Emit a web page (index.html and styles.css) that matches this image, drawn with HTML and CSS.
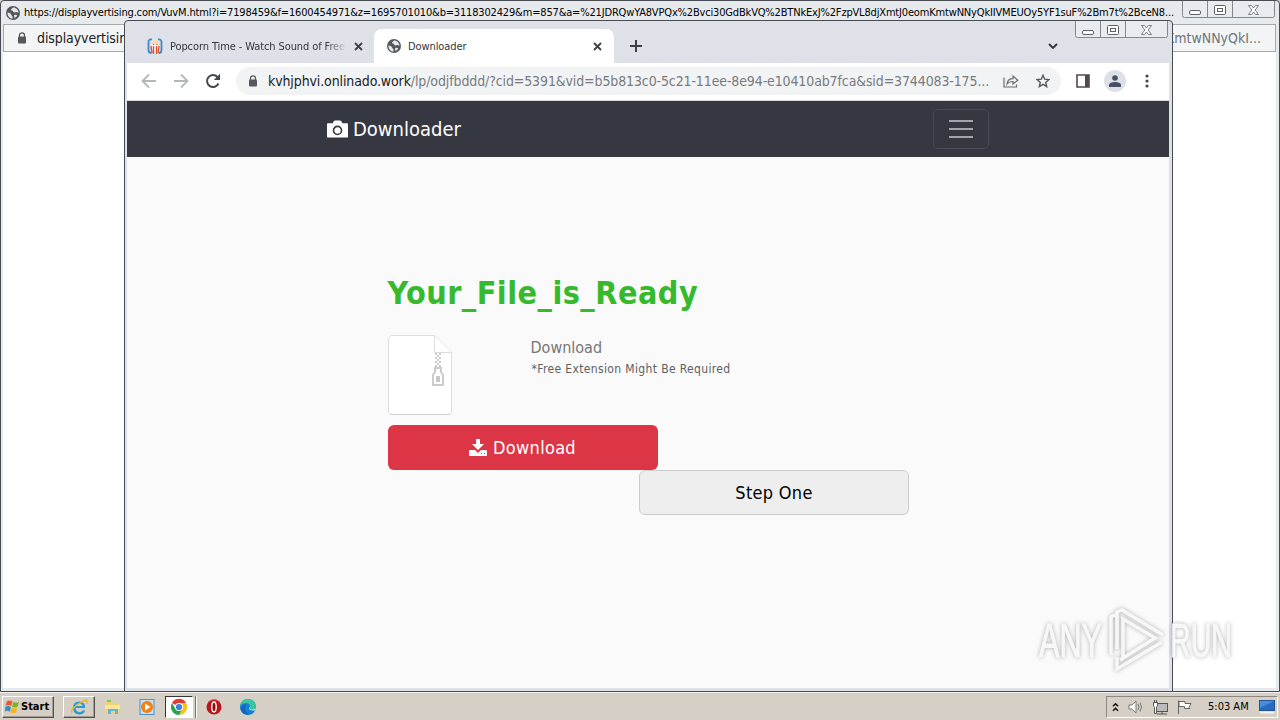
FILE: index.html
```
<!DOCTYPE html>
<html lang="en">

<head>
  <meta charset="UTF-8">
  <meta name="viewport" content="width=device-width, initial-scale=1.0">
  <title>Downloader</title>
  <link rel="stylesheet" href="styles.css">
</head>

<body>
  <svg width="0" height="0" class="symbols">
    <symbol id="globe" viewBox="0 0 14 14">
      <circle cx="7" cy="7" r="7" fill="#54585d" />
      <path d="M1.500 6.500c2 .2 3.500 1 3.700 2.200.1 1 1.300.8 1.300 2v2C3.500 12.500 1.300 10 1.500 6.500zM7 1.500c-.2 1-1.800 1-2 2.200 0 .9 1.700.6 2 1.500.3 1 1.700 1.500 2.500 1 .8-.4 1.800.2 3 .6 0-2.800-2.300-5.300-5.500-5.300zM8 9.200c1-.8 2.500-.5 3.300.3-.6 1.200-1.600 2-2.800 2.500z" fill="#e4e7ea" />
    </symbol>
    <symbol id="lock" viewBox="0 0 10 12">
      <path d="M2.500 5V3.300a2.500 2.500 0 0 1 5 0V5" fill="none" stroke="#54585d" stroke-width="1.300" />
      <rect x="1" y="4.500" width="8" height="7" rx="1" fill="#54585d" />
    </symbol>
    <symbol id="caption" viewBox="0 0 94 18">
      <path d="M.5 0v14.500q0 2 2 2h88q2 0 2-2V0M25.500 0v16M50.500 0v16" fill="#e9ecef" stroke="#83888d" />
      <rect x="7.500" y="9.500" width="11" height="4" rx="1.500" fill="#fff" stroke="#5c6167" />
      <rect x="32.500" y="4.500" width="11" height="9" rx="1" fill="#fff" stroke="#5c6167" />
      <rect x="35.500" y="7.500" width="5" height="3" fill="#fff" stroke="#5c6167" />
      <path d="M66.500 4.500h3l2 2.500 2-2.500h3l-3.300 4.500 3.300 4.500h-3l-2-2.500-2 2.500h-3l3.300-4.500z" fill="#fff" stroke="#6c7177" stroke-width=".9" />
    </symbol>
  </svg>

  <div class="desktop">
    <div class="window back-window">
      <div class="title-bar">
        <svg class="title-icon"><use href="#globe" /></svg>
        <span class="title-text">https://displayvertising.com/VuvM.html?i=7198459&amp;f=1600454971&amp;z=1695701010&amp;b=3118302429&amp;m=857&amp;a=%21JDRQwYA8VPQx%2Bvci30GdBkVQ%2BTNkExJ%2FzpVL8djXmtJ0eomKmtwNNyQkIIVMEUOy5YF1suF%2Bm7t%2BceN8...</span>
      </div>
      <svg class="caption"><use href="#caption" /></svg>
      <div class="popup-address">
        <svg class="lock"><use href="#lock" /></svg>
        <span class="popup-host">displayvertising.com</span>
        <span class="popup-path">KmtwNNyQkI...</span>
      </div>
      <div class="popup-page"></div>
    </div>

    <div class="window front-window">
      <svg class="caption"><use href="#caption" /></svg>
      <div class="tab-strip">
        <div class="tab">
          <svg class="popcorn" viewBox="0 0 16 16">
            <path d="M5 1.500Q1.500 1 1.500 4v8q0 3 3 3M11 1.500q3.500-.5 3.500 2.500v8q0 3-3 3" fill="none" stroke="#3c86d0" stroke-width="1.800" />
            <path d="M4 7l1 9h6l1-9z" fill="#fff" />
            <path d="M4 8l1 7M6.500 8v8M9.500 8v8M12 8l-1 7" stroke="#d9502f" stroke-width="1.400" />
            <path d="M4 7q-1-3 2-3 1-3 4-1.500 3 0 2 4.500z" fill="#f4dcbf" />
            <path d="M6 7l1-1M9.500 6l1 1" stroke="#80604c" />
          </svg>
          <span class="tab-title fade">Popcorn Time - Watch Sound of Free</span>
          <svg class="tab-close" viewBox="0 0 9 9"><path d="M1 1l7 7M8 1l-7 7" stroke="#3c4043" stroke-width="1.800" /></svg>
        </div>
        <div class="tab active">
          <svg class="title-icon"><use href="#globe" /></svg>
          <span class="tab-title">Downloader</span>
          <svg class="tab-close" viewBox="0 0 9 9"><path d="M1 1l7 7M8 1l-7 7" stroke="#3c4043" stroke-width="1.800" /></svg>
        </div>
        <svg class="new-tab" viewBox="0 0 12 12"><path d="M6 0v12M0 6h12" stroke="#3c4043" stroke-width="2" /></svg>
        <svg class="tab-search" viewBox="0 0 10 6"><path d="M1 1l4 4 4-4" fill="none" stroke="#303338" stroke-width="1.800" /></svg>
      </div>

      <div class="toolbar">
        <svg class="nav-icon" viewBox="0 0 16 16"><path d="M15 8H2M8 1.500L1.500 8 8 14.500" fill="none" stroke="#b4b7ba" stroke-width="1.800" /></svg>
        <svg class="nav-icon" viewBox="0 0 16 16"><path d="M1 8h13M8 1.500L14.500 8 8 14.500" fill="none" stroke="#b4b7ba" stroke-width="1.800" /></svg>
        <svg class="nav-icon" viewBox="0 0 16 16"><path d="M13.500 10.500A6 6 0 1 1 12.500 4" fill="none" stroke="#45494d" stroke-width="2" /><path d="M15 .8V7H8.800z" fill="#45494d" /></svg>
        <div class="omnibox">
          <svg class="lock"><use href="#lock" /></svg>
          <span class="url"><span class="url-host">kvhjphvi.onlinado.work</span>/lp/odjfbddd/?cid=5391&amp;vid=b5b813c0-5c21-11ee-8e94-e10410ab7fca&amp;sid=3744083-175...</span>
          <svg class="share" viewBox="0 0 16 14"><path d="M1 3.500V13h12.500v-2.500M4 10c.4-3.500 2.500-5.300 6-5.300V2l4.800 4.200L10 10V7.500C7 7.500 5.500 8 4 10z" fill="none" stroke="#6a6e73" stroke-width="1.200" /></svg>
          <svg class="star" viewBox="0 0 14 14"><path d="M7 1.300l1.700 3.900 4.200.4-3.200 2.800 1 4.200L7 10.400l-3.700 2.200 1-4.200L1.100 5.600l4.200-.4z" fill="none" stroke="#54585d" stroke-width="1.400" /></svg>
        </div>
        <svg class="side-panel" viewBox="0 0 14 14"><path d="M1 1h12v12H1z" fill="none" stroke="#54484a" stroke-width="1.600" /><path d="M9 1h4v12H9z" fill="#54484a" /></svg>
        <div class="avatar">
          <svg viewBox="0 0 12 12"><circle cx="6" cy="3" r="2.800" fill="#495063" /><path d="M0 12v-2c0-2 3-3 6-3s6 1 6 3v2z" fill="#495063" /></svg>
        </div>
        <svg class="menu-dots" viewBox="0 0 4 14"><g fill="#45494d"><circle cx="2" cy="2" r="1.600" /><circle cx="2" cy="7" r="1.600" /><circle cx="2" cy="12" r="1.600" /></g></svg>
      </div>

      <div class="navbar">
        <div class="brand">
          <svg class="camera" viewBox="0 0 22 18"><path d="M1 3h5l1-2q.5-1 1.500-1h5q1 0 1.500 1l1 2h5q1 0 1 1v13q0 1-1 1H1q-1 0-1-1V4q0-1 1-1z" fill="#fff" /><circle cx="11" cy="10.500" r="4.200" fill="#fff" stroke="#353840" stroke-width="1.700" /></svg>
          <span>Downloader</span>
        </div>
        <div class="toggler"><i></i><i></i><i></i></div>
      </div>

      <div class="page">
        <h1>Your_File_is_Ready</h1>
        <div class="file-row">
          <svg class="file-icon" viewBox="0 0 64 80">
            <path d="M4 .5h43L63.500 17v59q0 3.500-3.500 3.500H4Q.5 79.500.5 76V4Q.5.5 4 .5z" fill="#fff" stroke="#dedede" />
            <path d="M2 79.500h60" stroke="#cfcfcf" />
            <path d="M46.500 1v16.500h17" fill="#fff" stroke="#dcdcdc" />
            <path d="M48 18v16M52 18v16" stroke="#ccc" stroke-width="2" stroke-dasharray="2 2" />
            <path d="M50 20v16" stroke="#d0d0d0" stroke-width="2" stroke-dasharray="2 2" />
            <path d="M47 33h6v4l2 3v10H45V40l2-3z" fill="#fff" stroke="#ccc" stroke-width="2" />
            <rect x="48" y="41" width="4" height="6" fill="#c8c8c8" />
          </svg>
          <div class="file-info">
            <div class="file-name">Download</div>
            <div class="file-note">*Free Extension Might Be Required</div>
          </div>
        </div>
        <div class="btn btn-download">
          <svg class="download-icon" viewBox="0 0 18 17"><path d="M7 0h4v5h4l-6 6-6-6h4zM1 11h5l3 3 3-3h5q1 0 1 1v4q0 1-1 1H1q-1 0-1-1v-4q0-1 1-1z" fill="#fff" /><path d="M12 14.500h1M15 14.500h1" stroke="#dc3545" /></svg>
          <span>Download</span>
        </div>
        <div class="btn btn-step"><span>Step One</span></div>
      </div>
    </div>

    <svg class="watermark" viewBox="0 0 214 76">
      <g class="watermark-shape">
        <text x="6" y="53" textLength="63" lengthAdjust="spacingAndGlyphs">ANY</text>
        <text x="137" y="53" textLength="62" lengthAdjust="spacingAndGlyphs">RUN</text>
        <path d="M78 51V13l6-3M84 45V8l5-2 41 25M90 54V15l32 19-35 22M84 53v12l45-27" />
      </g>
    </svg>

    <div class="taskbar">
      <div class="start">
        <svg viewBox="0 0 16 15"><path d="M2 2q3-2 6 0L6.500 7q-3-2-6 0z" fill="#e85a26" /><path d="M9 2.500q3 2 6 0L13.500 7.500q-3 2-6 0z" fill="#77b52b" /><path d="M.3 8q3-2 6 0L5 13q-3-2-5 0z" fill="#358bc8" /><path d="M7 8.500q3 2 6 0L12 13.500q-3 2-6.300 0z" fill="#f3b71b" /></svg>
        <span>Start</span>
      </div>
      <div class="task raised">
        <svg viewBox="0 0 18 18"><path d="M14.500 10H5.500q.5 4 4 4 2 0 3.200-1.600h2.600Q13.800 16.500 9.500 16.500 3 16.300 3 9.800 3.200 3.500 9.300 3.500q6 .2 6 6.500zM5.700 8h6.700Q12 5.500 9 5.500T5.700 8z" fill="#299bd8" /><path d="M2 15q-2-3 5-8t9-5q2 1 .5 3.500" fill="none" stroke="#ebb630" stroke-width="1.500" /></svg>
      </div>
      <div class="task">
        <svg viewBox="0 0 18 18"><path d="M2 3h6l1 2h7v10H2z" fill="#efd36d" /><path d="M3 2h4v2H3z" fill="#7bc66c" /><path d="M1 7h15v4H1z" fill="#f8e7a2" /><path d="M4 16v-5h10v5h-3v-3H7v3z" fill="#65b2dc" /></svg>
      </div>
      <div class="task">
        <svg viewBox="0 0 18 18"><rect x="2" y="1.500" width="14" height="15" fill="#c7dff0" stroke="#4794cf" /><circle cx="9" cy="9" r="6" fill="#f08114" /><path d="M7 5.500v7L12.500 9z" fill="#fff" /></svg>
      </div>
      <div class="task pressed">
        <svg viewBox="0 0 18 18"><path d="M9 9L2 5a8 8 0 0 1 14 0z" fill="#e23d30" /><path d="M9 9V5h7a8 8 0 0 1-7 12l3.500-6z" fill="#fbc116" /><path d="M9 9l3.500 2L9 17A8 8 0 0 1 2 5l3.500 6z" fill="#2aa34a" /><circle cx="9" cy="9" r="4" fill="#fff" /><circle cx="9" cy="9" r="3.100" fill="#3b7de9" /></svg>
      </div>
      <div class="task-divider"></div>
      <div class="task">
        <svg viewBox="0 0 18 18"><circle cx="9" cy="9" r="7.500" fill="#ba1519" /><path d="M3 4q6-5 12 0" fill="none" stroke="#de6765" /><ellipse cx="9" cy="9" rx="2.200" ry="5" fill="#8c0b10" stroke="#fff" stroke-width="1.400" /></svg>
      </div>
      <div class="task">
        <svg viewBox="0 0 18 18"><circle cx="9" cy="9" r="8" fill="#1681d4" /><path d="M1.200 8Q2 1 9 1t8 7q-.5 4-5 3.500-2-.5-1-2Q11.500 5 7 5 3 5 1.200 8z" fill="#39c6a1" /><path d="M6.500 8q-2 6 4 8-7 2-9-5 1-4 6-5z" fill="#1565b6" /><path d="M10 9.500Q9.500 13 16 12.500L17 10q-2 2-5 1.500-2-.5-1-2z" fill="#d5eef0" /></svg>
      </div>

      <div class="tray">
        <svg class="chevrons" viewBox="0 0 7 10"><path d="M1 4.200l2.500-2.500L6 4.200M1 8.700l2.500-2.500L6 8.700" fill="none" stroke="#111" stroke-width="1.500" /></svg>
        <svg class="tray-icon" viewBox="0 0 16 16"><path d="M1 6h3l4-4v12l-4-4H1z" fill="#fff" stroke="#777" /><path d="M10 5q2 3 0 6M12 3.500q3 4.500 0 9" fill="none" stroke="#777" /></svg>
        <svg class="tray-icon" viewBox="0 0 16 16"><rect x="4.500" y="4.500" width="11" height="8" fill="#bbb" stroke="#555" /><path d="M5 15h10M10 13v2" stroke="#555" /><path d="M1.500 3.500h4v3l-1 2v6h-2v-6l-1-2zM2.500 1v2M4.500 1v2" fill="#fff" stroke="#555" /></svg>
        <svg class="tray-icon" viewBox="0 0 16 16"><path d="M2.500 1.500V15M3 2.500h6v2h6l-2 4 1 1H8.500v-2H3z" fill="#fff" stroke="#666" /></svg>
        <span class="clock">5:03 AM</span>
        <svg class="show-desktop" viewBox="0 0 16 14"><rect x=".5" y=".5" width="15" height="10" fill="#286ac3" stroke="#23559b" /><path d="M1 1h14L1 8z" fill="#4a8de0" /><path d="M1 12.500h14" stroke="#f3f3f3" stroke-width="2" /></svg>
      </div>
    </div>
  </div>
</body>

</html>
```
FILE: styles.css
```
* {
  box-sizing: border-box;
}

body {
  margin: 0;
  font-family: "DejaVu Sans Condensed", "DejaVu Sans", sans-serif;
  font-stretch: condensed;
  color: #202124;
}

svg {
  display: block;
  flex: none;
}

span {
  white-space: nowrap;
}

.symbols {
  position: absolute;
}

.desktop {
  position: relative;
  width: 1280px;
  height: 720px;
  overflow: hidden;
  background: #d5cfc6;
}

/* windows */
.window {
  position: absolute;
  display: flex;
  flex-direction: column;
  border: 1px solid #484c52;
  border-radius: 4px 4px 0 0;
}

.back-window {
  left: 0;
  top: 0;
  width: 1280px;
  height: 692px;
  padding: 0 3px 3px 2px;
  background: #e7eaed;
}

.front-window {
  left: 124px;
  top: 20px;
  width: 1049px;
  height: 672px;
  padding: 0 3px 3px 2px;
  background: #dee1e7;
}

.title-bar {
  display: flex;
  align-items: center;
  height: 23px;
  padding-left: 3px;
  gap: 4px;
}

.title-icon {
  width: 14px;
  height: 14px;
}

.title-text {
  font-size: 11px;
  letter-spacing: -0.17px;
  color: #000;
}

.caption {
  position: absolute;
  top: 0;
  right: 3px;
  width: 94px;
  height: 18px;
}

.popup-address {
  display: flex;
  align-items: center;
  height: 28px;
  padding: 0 14px 0 13px;
  border: 1px solid #a5a8ac;
  background: #f2f4f5;
  font-size: 14px;
}

.lock {
  width: 10px;
  height: 12px;
}

.popup-host {
  margin-left: 10px;
  letter-spacing: -0.1px;
}

.popup-path {
  margin-left: auto;
  color: #70757a;
}

.popup-page {
  flex: 1;
  background: #fff;
}

/* tabs */
.tab-strip {
  display: flex;
  align-items: flex-end;
  height: 42px;
}

.tab {
  display: flex;
  align-items: center;
  width: 247px;
  height: 34px;
  padding: 0 11px 0 20px;
}

.tab.active {
  width: 240px;
  padding: 0 12px 0 13px;
  border-radius: 8px 8px 0 0;
  background: #fff;
}

.popcorn {
  width: 16px;
  height: 16px;
}

.tab-title {
  margin-left: 7px;
  font-size: 11px;
  letter-spacing: -0.1px;
  color: #33363b;
}

.fade {
  width: 177px;
  overflow: hidden;
  -webkit-mask-image: linear-gradient(to right, #000 88%, transparent);
  mask-image: linear-gradient(to right, #000 88%, transparent);
}

.tab-close {
  width: 9px;
  height: 9px;
  margin-left: auto;
}

.new-tab {
  width: 12px;
  height: 12px;
  margin: 0 0 11px 16px;
}

.tab-search {
  width: 10px;
  height: 6px;
  margin: 0 111px 14px auto;
}

/* toolbar */
.toolbar {
  display: flex;
  align-items: center;
  height: 38px;
  padding: 0 20px 1px 14px;
  border-bottom: 1px solid #d7dadd;
  background: #fff;
}

.nav-icon {
  width: 16px;
  height: 16px;
  margin-right: 16px;
}

.omnibox {
  display: flex;
  align-items: center;
  width: 825px;
  height: 28px;
  margin: 0 15px 0 -1px;
  padding: 0 11px 0 12px;
  border-radius: 14px;
  background: #f1f3f4;
}

.url {
  margin-left: 10px;
  font-size: 14px;
  letter-spacing: -0.12px;
  color: #777b7f;
}

.url-host {
  color: #202124;
}

.share {
  width: 16px;
  height: 14px;
  margin-left: auto;
}

.star {
  width: 14px;
  height: 14px;
  margin-left: 17px;
}

.side-panel {
  width: 14px;
  height: 14px;
}

.avatar {
  display: flex;
  justify-content: center;
  align-items: center;
  width: 22px;
  height: 22px;
  margin-left: 14px;
  border-radius: 50%;
  background: #dde1e7;
}

.avatar svg {
  width: 12px;
  height: 12px;
}

.menu-dots {
  width: 4px;
  height: 14px;
  margin-left: auto;
}

/* site */
.navbar {
  display: flex;
  justify-content: space-between;
  align-items: center;
  height: 56px;
  padding: 0 180px 0 200px;
  background: #353840;
}

.brand {
  display: flex;
  align-items: center;
  gap: 5px;
  font-size: 20px;
  color: #fff;
}

.camera {
  width: 21px;
  height: 18px;
}

.toggler {
  display: flex;
  flex-direction: column;
  justify-content: center;
  align-items: center;
  gap: 6px;
  width: 56px;
  height: 40px;
  border: 1px solid #484b53;
  border-radius: 5px;
}

.toggler i {
  width: 24px;
  height: 2px;
  background: #a3a5a9;
}

.page {
  flex: 1;
  padding: 116px 260px 0 260.5px;
  background: #fafafa;
}

h1 {
  height: 40px;
  margin: 0;
  font-size: 32px;
  line-height: 40px;
  letter-spacing: 0.48px;
  white-space: nowrap;
  color: #37b92d;
}

.file-row {
  display: flex;
  gap: 79px;
  height: 90px;
  margin-top: 22px;
}

.file-icon {
  width: 64px;
  height: 80px;
}

.file-name {
  margin-top: 2px;
  font-size: 16px;
  line-height: 21px;
  color: #777;
}

.file-note {
  margin-left: 1px;
  font-size: 12px;
  line-height: 22px;
  letter-spacing: 0.36px;
  white-space: nowrap;
  color: #606060;
}

.btn {
  display: flex;
  justify-content: center;
  align-items: center;
  gap: 6px;
  width: 270px;
  height: 45px;
  border-radius: 6px;
  font-size: 18px;
  letter-spacing: 0.3px;
}

.btn-download {
  background: #dc3545;
  color: #fff;
}

.btn-step {
  margin-left: auto;
  border: 1px solid #ccc;
  background: #eee;
  color: #000;
}

.download-icon {
  width: 18px;
  height: 17px;
}

.watermark {
  position: absolute;
  left: 1033px;
  top: 604px;
  width: 214px;
  height: 76px;
}

.watermark-shape {
  font-family: "Liberation Sans", sans-serif;
  font-size: 48px;
  fill: #f7f7f7;
  stroke: #f7f7f7;
  stroke-width: 1;
  filter: drop-shadow(0 0 2px rgba(0, 0, 0, 0.3));
}

.watermark-shape path {
  fill: none;
  stroke-width: 3.5;
}

/* taskbar */
.taskbar {
  position: absolute;
  left: 0;
  top: 692px;
  display: flex;
  align-items: center;
  width: 1280px;
  height: 28px;
  padding: 0 2px 0 2px;
  border-top: 1px solid #f4f2ee;
  background: #d5cfc6;
}

.start,
.raised {
  border: 1px solid;
  border-color: #fff #55524e #55524e #fff;
  box-shadow: inset -1px -1px #a09b94;
}

.start {
  display: flex;
  align-items: center;
  gap: 1px;
  width: 52px;
  height: 22px;
  margin-right: 9px;
  padding-left: 2px;
  font-size: 11px;
  font-weight: bold;
  color: #000;
}

.start svg {
  width: 15px;
  height: 15px;
}

.task {
  display: flex;
  justify-content: center;
  align-items: center;
  width: 32px;
  height: 22px;
  margin-right: 2px;
}

.task svg {
  width: 18px;
  height: 18px;
}

.pressed {
  width: 28px;
  border: 1px solid;
  border-color: #333 #fff #fff #333;
  background: #fff;
}

.task-divider {
  width: 2px;
  height: 22px;
  margin-right: 1px;
  border-left: 1px solid #77736d;
  background: #fff;
}

.tray {
  display: flex;
  align-items: center;
  width: 172px;
  height: 22px;
  margin-left: auto;
  padding: 0 2px 0 5px;
  border: 1px solid;
  border-color: #8d8881 #fff #fff #8d8881;
}

.chevrons {
  width: 7px;
  height: 10px;
  margin-right: 9px;
}

.tray-icon {
  width: 16px;
  height: 16px;
  margin-right: 8px;
}

.clock {
  margin-left: 8px;
  font-size: 11px;
  color: #000;
}

.show-desktop {
  width: 16px;
  height: 14px;
  margin-left: auto;
}
```
